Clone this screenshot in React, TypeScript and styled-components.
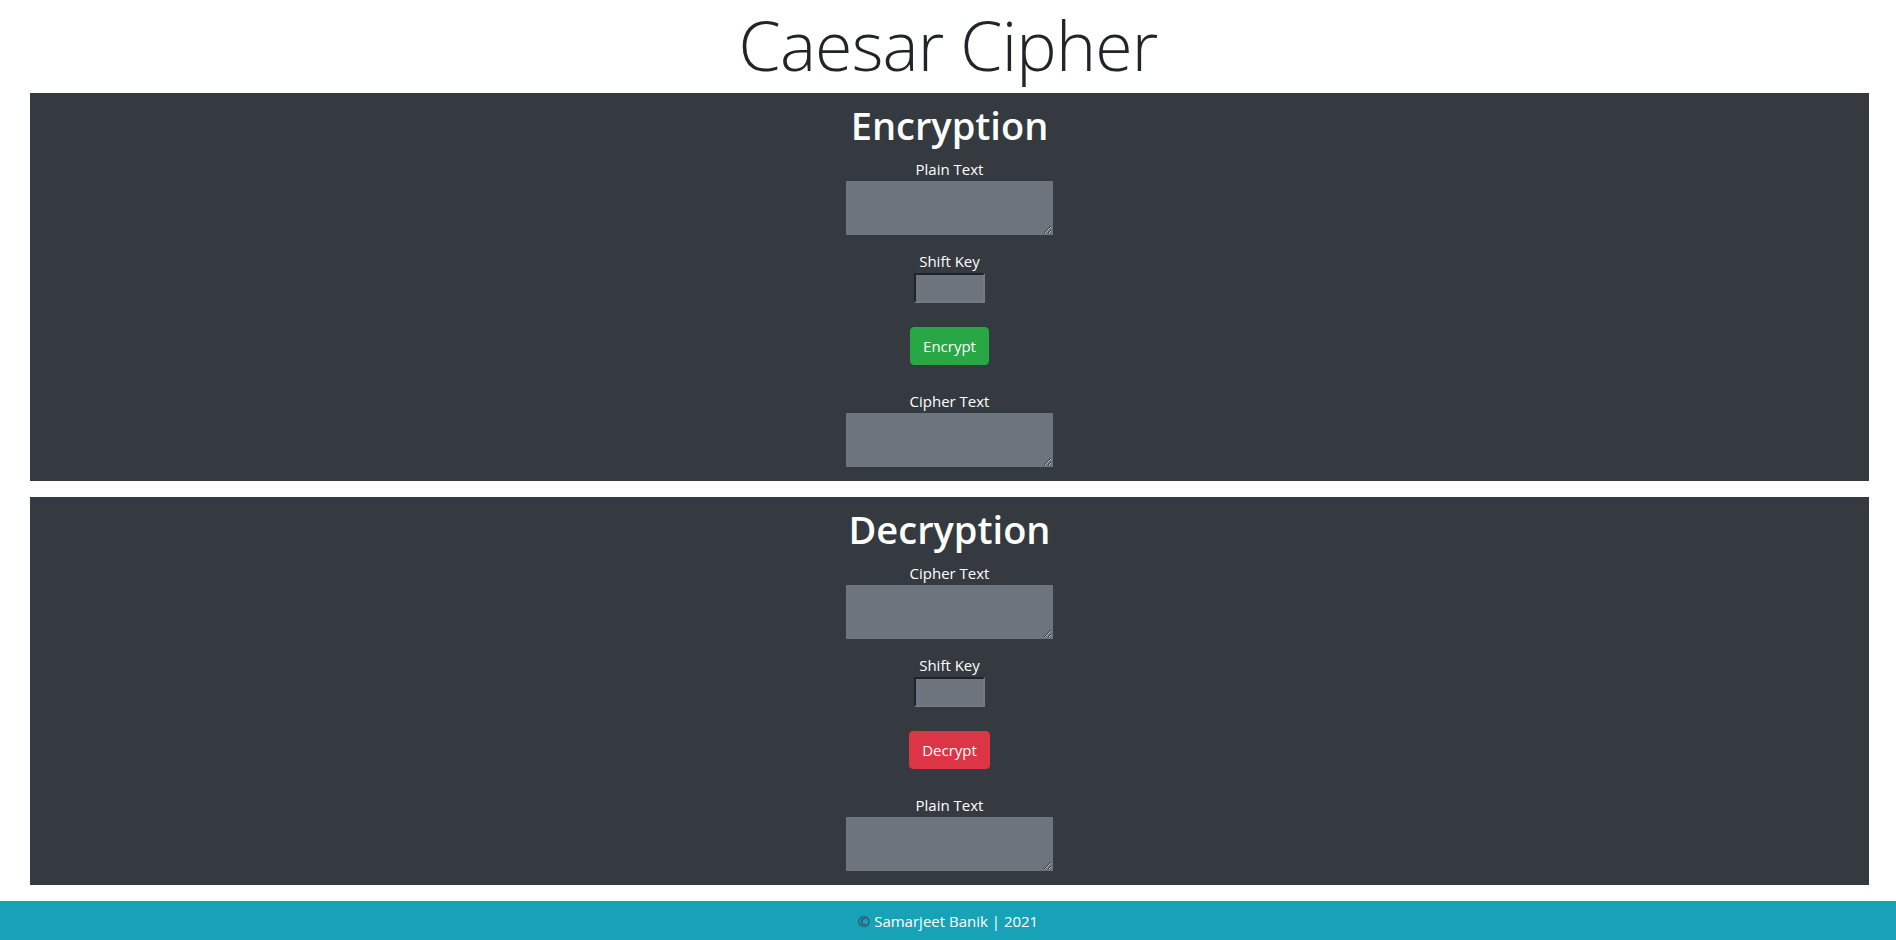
import styled, { createGlobalStyle } from 'styled-components';

const GlobalStyle = createGlobalStyle`
  html, body {
    margin: 0;
    padding: 0;
    background: #ffffff;
    font-family: "Open Sans", "Noto Sans", "Liberation Sans", sans-serif;
    color: #212529;
  }
  * {
    box-sizing: border-box;
  }
`;

const Page = styled.div`
  display: flex;
  flex-direction: column;
  min-height: 940px;
`;

const Title = styled.h1`
  margin: 0 0 7px 0;
  height: 86px;
  font-size: 68px;
  font-weight: 300;
  letter-spacing: -0.8px;
  line-height: 90px;
  text-align: center;
  color: #212529;
`;

const Panel = styled.section`
  margin: 0 27px 16px 30px;
  height: 388px;
  padding-top: 8px;
  background: #343a40;
  color: #ffffff;
  display: flex;
  flex-direction: column;
  align-items: center;
`;

const PanelTitle = styled.h2`
  margin: 0 0 8px 0;
  font-size: 38px;
  font-weight: 600;
  line-height: 48px;
`;

const Label = styled.label<{ $gap?: number }>`
  display: block;
  margin-top: ${(p) => p.$gap ?? 0}px;
  font-size: 15px;
  line-height: 24px;
  color: #ffffff;
`;

const TextBox = styled.textarea`
  display: block;
  width: 207px;
  height: 54px;
  margin: 0;
  border: 1px solid #6c757d;
  background: #6c757d;
  color: #ffffff;
  font-family: inherit;
  font-size: 16px;
`;

const KeyInput = styled.input`
  display: block;
  width: 71px;
  height: 30px;
  margin: 0;
  border-width: 2px;
  border-style: solid;
  border-color: #1f2226 #767b80 #767b80 #1f2226;
  background: #6c757d;
  color: #ffffff;
  font-size: 16px;
`;

const ActionButton = styled.button<{ $tone: 'success' | 'danger' }>`
  margin-top: 24px;
  height: 38px;
  padding: 0 12px;
  border: 1px solid ${(p) => (p.$tone === 'success' ? '#28a745' : '#dc3545')};
  border-radius: 4px;
  background: ${(p) => (p.$tone === 'success' ? '#28a745' : '#dc3545')};
  color: #ffffff;
  font-family: inherit;
  font-size: 15px;
  line-height: 24px;
  cursor: pointer;
`;

const Footer = styled.footer`
  height: 40px;
  padding: 8px 0;
  background: #17a2b8;
  color: #ffffff;
  text-align: center;
  font-size: 15px;
  line-height: 24px;
`;

const Copy = styled.span`
  color: #343a40;
`;

type SectionProps = {
  title: string;
  inputLabel: string;
  outputLabel: string;
  action: string;
  tone: 'success' | 'danger';
};

const CipherSection = ({ title, inputLabel, outputLabel, action, tone }: SectionProps) => (
  <Panel>
    <PanelTitle>{title}</PanelTitle>
    <Label>{inputLabel}</Label>
    <TextBox />
    <Label $gap={14}>Shift Key</Label>
    <KeyInput type="text" />
    <ActionButton $tone={tone}>{action}</ActionButton>
    <Label $gap={24}>{outputLabel}</Label>
    <TextBox readOnly />
  </Panel>
);

export default function App() {
  return (
    <Page>
      <GlobalStyle />
      <Title>Caesar Cipher</Title>
      <CipherSection
        title="Encryption"
        inputLabel="Plain Text"
        outputLabel="Cipher Text"
        action="Encrypt"
        tone="success"
      />
      <CipherSection
        title="Decryption"
        inputLabel="Cipher Text"
        outputLabel="Plain Text"
        action="Decrypt"
        tone="danger"
      />
      <Footer>
        <Copy>©</Copy> Samarjeet Banik | 2021
      </Footer>
    </Page>
  );
}
